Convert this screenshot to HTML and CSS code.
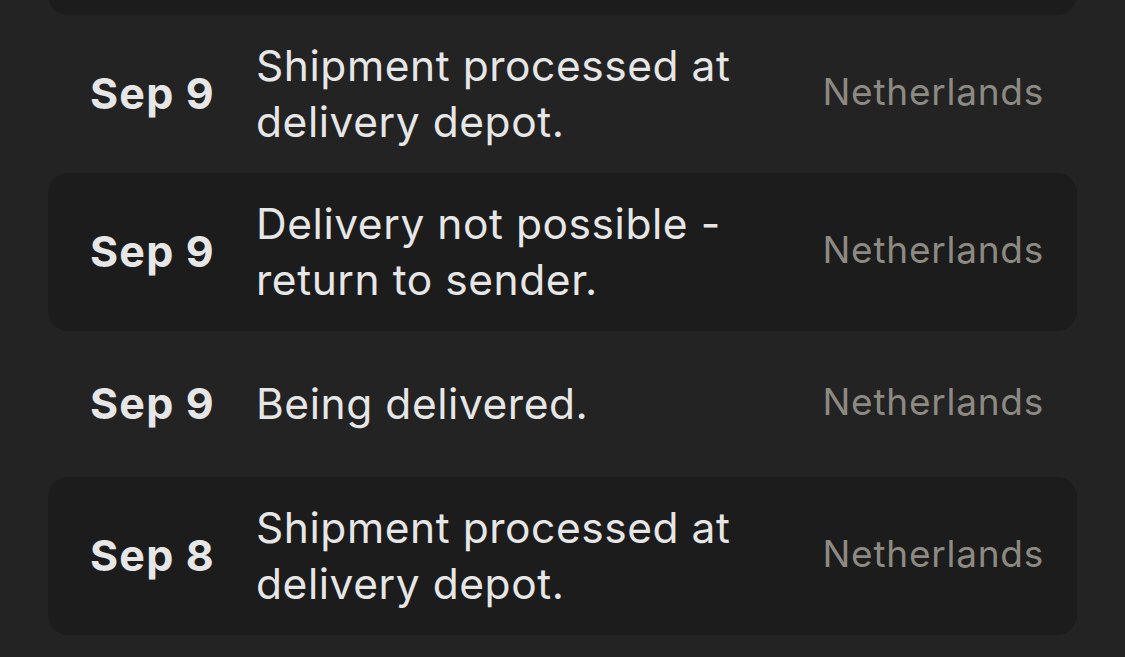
FILE: index.html
```html
<!DOCTYPE html>
<html lang="en">
<head>
<meta charset="utf-8">
<title>Tracking history</title>
<link rel="stylesheet" href="styles.css">
</head>
<body>
<div class="list">
  <div class="row shaded cut"></div>
  <div class="row">
    <div class="date">Sep 9</div>
    <div class="desc">Shipment processed at delivery depot.</div>
    <div class="place">Netherlands</div>
  </div>
  <div class="row shaded">
    <div class="date">Sep 9</div>
    <div class="desc">Delivery not possible - return to sender.</div>
    <div class="place">Netherlands</div>
  </div>
  <div class="row single">
    <div class="date">Sep 9</div>
    <div class="desc">Being delivered.</div>
    <div class="place">Netherlands</div>
  </div>
  <div class="row shaded">
    <div class="date">Sep 8</div>
    <div class="desc">Shipment processed at delivery depot.</div>
    <div class="place">Netherlands</div>
  </div>
</div>
</body>
</html>
```
FILE: styles.css
```css
html, body {
  margin: 0;
  padding: 0;
  background: #232323;
  height: 100%;
  overflow: hidden;
}
body {
  font-family: Inter, "Noto Sans", sans-serif;
  color: #e6e6e6;
}
.list {
  margin: 0 48px;
  display: flex;
  flex-direction: column;
}
.row {
  display: grid;
  grid-template-columns: 166px 1fr auto;
  align-items: center;
  padding: 23px 33px 23px 42px;
  min-height: 100px;
  border-radius: 20px;
  box-sizing: border-box;
}
.row.single {
  min-height: 146px;
}
.shaded {
  background: #1c1c1c;
}
.cut {
  height: 158px;
  margin-top: -143px;
}
.date {
  font-size: 43px;
  font-weight: 700;
  letter-spacing: 1.2px;
  margin-bottom: 3px;
}
.desc {
  font-size: 42.5px;
  line-height: 56px;
  letter-spacing: 0.55px;
  max-width: 540px;
}
.place {
  font-size: 37px;
  letter-spacing: 0.75px;
  color: #8d8a83;
  margin-bottom: 5px;
}
```
